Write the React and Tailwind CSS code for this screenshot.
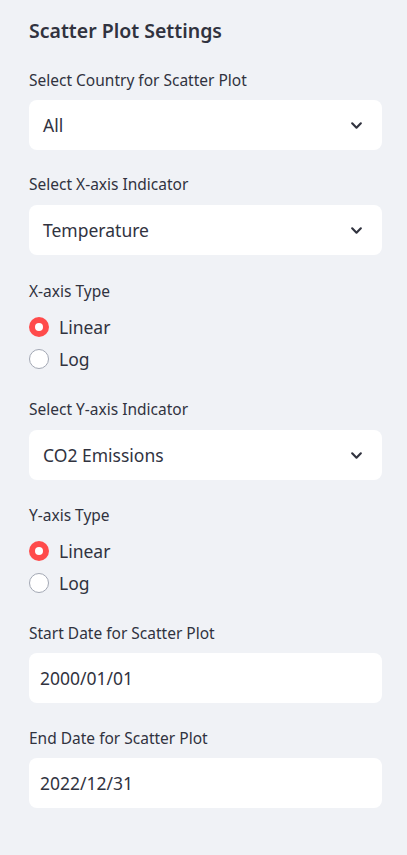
import React, { useState } from "react";

const font = { fontFamily: "'Noto Sans', 'Open Sans', sans-serif" };

const Chevron = () => (
  <svg width="13" height="13" viewBox="0 0 24 24" fill="none">
    <path d="M4 8l8 8 8-8" stroke="#31333f" strokeWidth="4" strokeLinecap="round" strokeLinejoin="round" />
  </svg>
);

const Label = ({ children, className = "" }) => (
  <p className={`text-[15.5px] leading-[20px] text-[#31333f] ${className}`}>{children}</p>
);

const SelectBox = ({ value }) => (
  <div className="h-[50px] rounded-[8px] bg-white flex items-center justify-between pl-[14px] pr-[19px]">
    <span className="text-[17.5px] text-[#31333f]">{value}</span>
    <Chevron />
  </div>
);

const DateBox = ({ value }) => (
  <div className="h-[50px] rounded-[8px] bg-white flex items-center pl-[11px]">
    <span className="text-[17.5px] text-[#31333f]">{value}</span>
  </div>
);

const Radio = ({ options, value, onChange }) => (
  <div className="flex flex-col gap-[8px]">
    {options.map((opt) => (
      <div
        key={opt}
        className="h-[24px] flex items-center gap-[10px] cursor-pointer"
        onClick={() => onChange(opt)}
      >
        {value === opt ? (
          <span className="w-[20px] h-[20px] rounded-full bg-[#ff4b4b] flex items-center justify-center">
            <span className="w-[8px] h-[8px] rounded-full bg-white" />
          </span>
        ) : (
          <span className="w-[20px] h-[20px] rounded-full bg-white border border-[#a3a8b4]" />
        )}
        <span className="text-[17.5px] text-[#31333f]">{opt}</span>
      </div>
    ))}
  </div>
);

export default function App() {
  const [xType, setXType] = useState("Linear");
  const [yType, setYType] = useState("Linear");

  return (
    <div className="w-[407px] h-[855px] bg-[#f0f2f6] pl-[29px] pr-[25px] pt-[17px]" style={font}>
      <h2 className="text-[19.5px] leading-[28px] font-semibold text-[#31333f]">Scatter Plot Settings</h2>

      <Label className="mt-[25px] mb-[10px]">Select Country for Scatter Plot</Label>
      <SelectBox value="All" />

      <Label className="mt-[24px] mb-[11px]">Select X-axis Indicator</Label>
      <SelectBox value="Temperature" />

      <Label className="mt-[26px] mb-[14px]">X-axis Type</Label>
      <Radio options={["Linear", "Log"]} value={xType} onChange={setXType} />

      <Label className="mt-[28px] mb-[11px]">Select Y-axis Indicator</Label>
      <SelectBox value="CO2 Emissions" />

      <Label className="mt-[25px] mb-[14px]">Y-axis Type</Label>
      <Radio options={["Linear", "Log"]} value={yType} onChange={setYType} />

      <Label className="mt-[28px] mb-[10px]">Start Date for Scatter Plot</Label>
      <DateBox value="2000/01/01" />

      <Label className="mt-[25px] mb-[10px]">End Date for Scatter Plot</Label>
      <DateBox value="2022/12/31" />
    </div>
  );
}
